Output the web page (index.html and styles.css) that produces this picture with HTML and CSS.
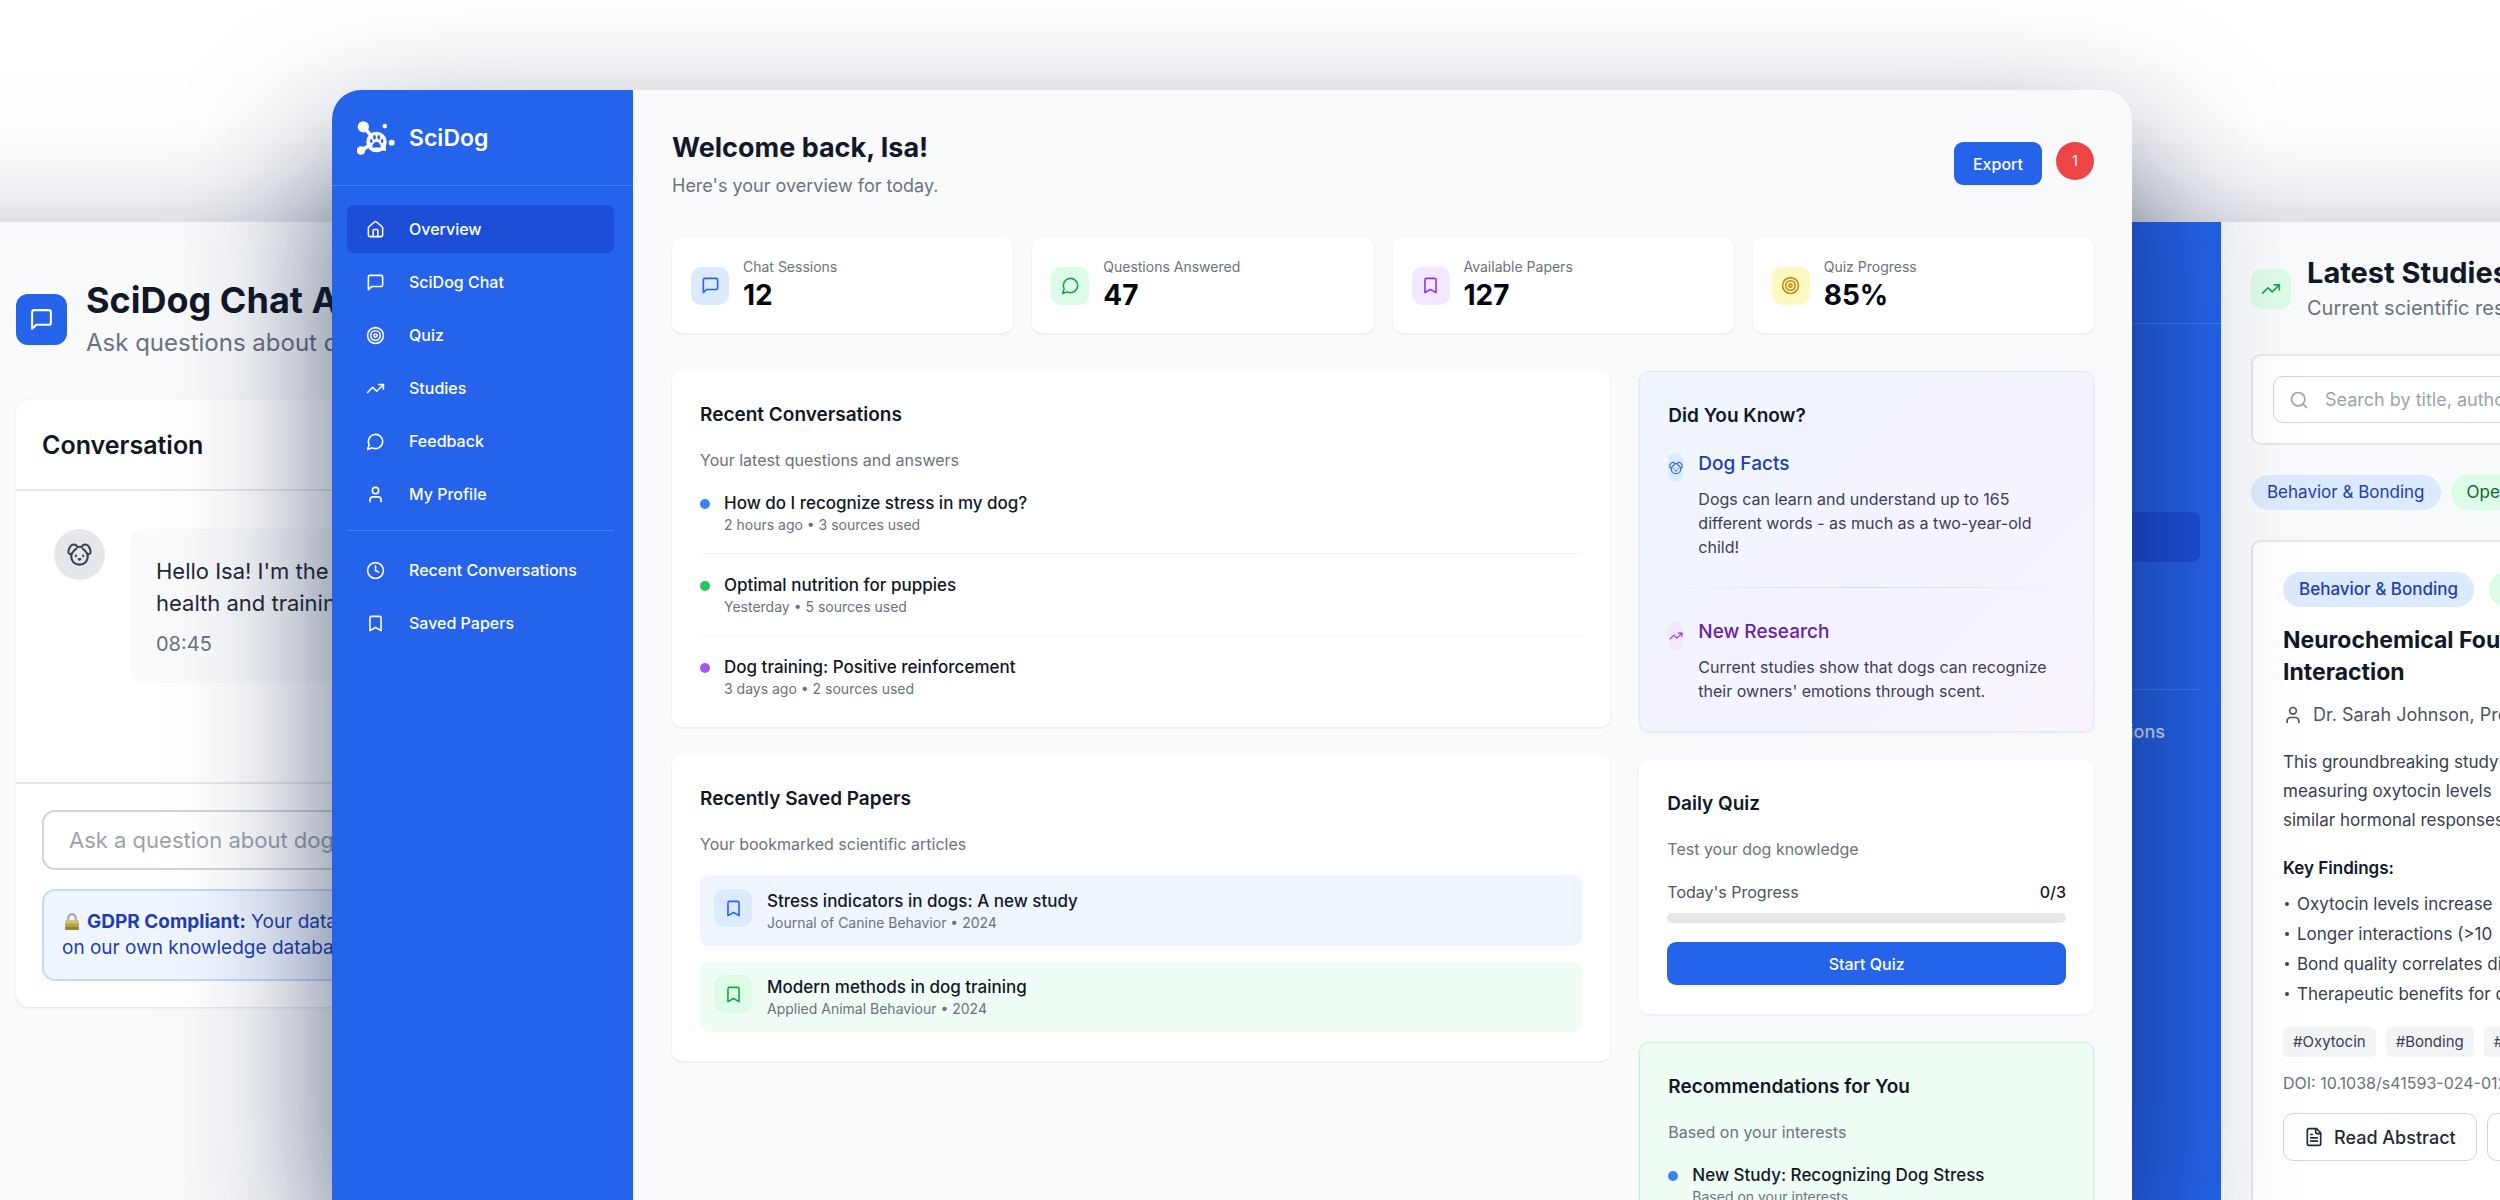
FILE: index.html
```
<!DOCTYPE html>
<html lang="en">
<head>
<meta charset="utf-8">
<title>SciDog</title>
<link rel="stylesheet" href="styles.css">
</head>
<body>
<svg class="defs" aria-hidden="true">
  <symbol id="i-home" viewBox="0 0 24 24"><path d="M15 21v-8a1 1 0 0 0-1-1h-4a1 1 0 0 0-1 1v8"/><path d="M3 10a2 2 0 0 1 .7-1.5l7-6a2 2 0 0 1 2.6 0l7 6A2 2 0 0 1 21 10v9a2 2 0 0 1-2 2H5a2 2 0 0 1-2-2z"/></symbol>
  <symbol id="i-chat" viewBox="0 0 24 24"><path d="M21 15a2 2 0 0 1-2 2H7l-4 4V5a2 2 0 0 1 2-2h14a2 2 0 0 1 2 2z"/></symbol>
  <symbol id="i-target" viewBox="0 0 24 24"><circle cx="12" cy="12" r="10"/><circle cx="12" cy="12" r="6"/><circle cx="12" cy="12" r="2"/></symbol>
  <symbol id="i-trend" viewBox="0 0 24 24"><path d="M22 7l-8.5 8.5-5-5L2 17"/><path d="M16 7h6v6"/></symbol>
  <symbol id="i-bubble" viewBox="0 0 24 24"><path d="M7.9 20A9 9 0 1 0 4 16.1L2 22z"/></symbol>
  <symbol id="i-user" viewBox="0 0 24 24"><path d="M19 21v-2a4 4 0 0 0-4-4H9a4 4 0 0 0-4 4v2"/><circle cx="12" cy="7" r="4"/></symbol>
  <symbol id="i-clock" viewBox="0 0 24 24"><circle cx="12" cy="12" r="10"/><path d="M12 6v6l4 2"/></symbol>
  <symbol id="i-mark" viewBox="0 0 24 24"><path d="M19 21l-7-4-7 4V5a2 2 0 0 1 2-2h10a2 2 0 0 1 2 2z"/></symbol>
  <symbol id="i-search" viewBox="0 0 24 24"><circle cx="11" cy="11" r="8"/><path d="M21 21l-4.3-4.3"/></symbol>
  <symbol id="i-file" viewBox="0 0 24 24"><path d="M15 2H6a2 2 0 0 0-2 2v16a2 2 0 0 0 2 2h12a2 2 0 0 0 2-2V7z"/><path d="M14 2v4a2 2 0 0 0 2 2h4"/><path d="M10 9H8"/><path d="M16 13H8"/><path d="M16 17H8"/></symbol>
  <symbol id="i-dog" viewBox="0 0 24 24"><path d="M10 5C9.200 3 7.200 2 5.200 2.600 3 3.300 1 7.600 1.400 10.200c.3 1.700 2.300 1.800 3.400.6C6.200 9.200 6.800 7.400 8.800 6.800"/><path d="M14 5c.8-2 2.800-3 4.800-2.400 2.200.7 4.200 5 3.800 7.600-.3 1.700-2.300 1.800-3.400.6-1.400-1.600-2-3.400-4-4"/><path d="M10 4.800c1.300-.4 2.700-.4 4 0"/><path d="M4.600 11.500c-.4 1-.5 2-.5 3 0 4 3.400 7.200 7.900 7.200s7.900-3.200 7.900-7.200c0-1-.1-2-.5-3"/><path d="M8.500 13v.6"/><path d="M15.500 13v.6"/><path d="M11.200 16.400h1.600l-.8.700z"/></symbol>
</svg>

<div class="stage">

  <section class="window chat">
    <header class="chat-head">
      <span class="tile"><svg class="icon"><use href="#i-chat"/></svg></span>
      <div>
        <h1>SciDog Chat AI</h1>
        <p>Ask questions about dogs</p>
      </div>
    </header>
    <div class="chat-card">
      <h2>Conversation</h2>
      <div class="thread">
        <span class="avatar"><svg class="icon"><use href="#i-dog"/></svg></span>
        <div class="bubble">
          <p>Hello Isa! I'm the<br>health and training</p>
          <time>08:45</time>
        </div>
      </div>
      <div class="composer">
        <input type="text" aria-label="Question" placeholder="Ask a question about dogs">
        <p class="gdpr"><svg class="lock" viewBox="0 0 15 18"><path d="M4 9V5.500a3.500 3.500 0 0 1 7 0V9" fill="none" stroke="#a3a9ab" stroke-width="2"/><rect x="1" y="8" width="13" height="9" rx="1" fill="#b5a642"/><rect x="1" y="8" width="13" height="3" rx="1" fill="#d0c56d"/><rect x="1" y="14" width="13" height="3" rx="1" fill="#93852f"/></svg><strong>GDPR Compliant:</strong> Your data<br>on our own knowledge database</p>
      </div>
    </div>
  </section>

  <section class="window studies">
    <aside class="s-side">
      <div class="s-logo"></div>
      <div class="s-active"></div>
      <hr>
      <a href="#">Recent Conversations</a>
    </aside>
    <div class="s-main">
      <header class="s-head">
        <span class="tile"><svg class="icon"><use href="#i-trend"/></svg></span>
        <div>
          <h1>Latest Studies</h1>
          <p>Current scientific research</p>
        </div>
      </header>
      <div class="s-search">
        <label><svg class="icon"><use href="#i-search"/></svg><input type="search" aria-label="Search studies" placeholder="Search by title, author"></label>
      </div>
      <div class="chips"><span class="chip blue">Behavior &amp; Bonding</span><span class="chip green">Open Access</span></div>
      <article class="study">
        <div class="chips wide"><span class="chip blue">Behavior &amp; Bonding</span><span class="chip green"></span></div>
        <h2>Neurochemical Foundations<br>Interaction</h2>
        <p class="author"><svg class="icon"><use href="#i-user"/></svg>Dr. Sarah Johnson, Prof.</p>
        <p class="abstract">This groundbreaking study<br>measuring oxytocin levels<br>similar hormonal responses</p>
        <h3>Key Findings:</h3>
        <ul>
          <li>Oxytocin levels increase</li>
          <li>Longer interactions (&gt;10</li>
          <li>Bond quality correlates directly</li>
          <li>Therapeutic benefits for dogs</li>
        </ul>
        <div class="tags"><span>#Oxytocin</span><span>#Bonding</span><span>#Dogs</span></div>
        <p class="doi">DOI: 10.1038/s41593-024-012</p>
        <div class="actions">
          <button type="button"><svg class="icon"><use href="#i-file"/></svg>Read Abstract</button>
          <button type="button" aria-label="More"></button>
        </div>
      </article>
    </div>
  </section>

  <section class="window app">
    <aside class="side">
      <div class="brand">
        <svg class="logo" viewBox="0 0 115 102"><g stroke="#fff" stroke-width="11"><path d="M19 17L50 52"/><path d="M11 89L44 70"/></g><g fill="#fff"><circle cx="19" cy="17" r="17"/><circle cx="84" cy="15" r="7"/><circle cx="105" cy="65" r="9"/><circle cx="12" cy="89" r="13"/><circle cx="59" cy="63" r="31"/><path d="M70 88l18 2-2-22z"/></g><g fill="#2563eb"><path d="M59 63c7 0 13 8 13 13 0 6-7 4-13 4s-13 2-13-4c0-5 6-13 13-13z"/><ellipse cx="43" cy="60" rx="4" ry="6"/><ellipse cx="53" cy="49" rx="4" ry="7"/><ellipse cx="66" cy="49" rx="4" ry="7"/><ellipse cx="76" cy="60" rx="4" ry="6"/></g></svg>
        <span>SciDog</span>
      </div>
      <nav>
        <a href="#" class="on"><svg class="icon"><use href="#i-home"/></svg>Overview</a>
        <a href="#"><svg class="icon"><use href="#i-chat"/></svg>SciDog Chat</a>
        <a href="#"><svg class="icon"><use href="#i-target"/></svg>Quiz</a>
        <a href="#"><svg class="icon"><use href="#i-trend"/></svg>Studies</a>
        <a href="#"><svg class="icon"><use href="#i-bubble"/></svg>Feedback</a>
        <a href="#"><svg class="icon"><use href="#i-user"/></svg>My Profile</a>
      </nav>
      <nav class="second">
        <a href="#"><svg class="icon"><use href="#i-clock"/></svg>Recent Conversations</a>
        <a href="#"><svg class="icon"><use href="#i-mark"/></svg>Saved Papers</a>
      </nav>
    </aside>
    <main>
      <header class="top">
        <div>
          <h1>Welcome back, Isa!</h1>
          <p>Here's your overview for today.</p>
        </div>
        <div class="top-actions">
          <button type="button" class="primary">Export</button>
          <span class="count">1</span>
        </div>
      </header>
      <div class="stats">
        <div class="card stat"><span class="tile blue"><svg class="icon"><use href="#i-chat"/></svg></span><div><p>Chat Sessions</p><strong>12</strong></div></div>
        <div class="card stat"><span class="tile green"><svg class="icon"><use href="#i-bubble"/></svg></span><div><p>Questions Answered</p><strong>47</strong></div></div>
        <div class="card stat"><span class="tile purple"><svg class="icon"><use href="#i-mark"/></svg></span><div><p>Available Papers</p><strong>127</strong></div></div>
        <div class="card stat"><span class="tile yellow"><svg class="icon"><use href="#i-target"/></svg></span><div><p>Quiz Progress</p><strong>85%</strong></div></div>
      </div>
      <div class="columns">
        <div class="col left">
          <section class="card">
            <h2>Recent Conversations</h2>
            <p class="sub">Your latest questions and answers</p>
            <ul class="convos">
              <li class="entry c-blue"><h3>How do I recognize stress in my dog?</h3><p>2 hours ago • 3 sources used</p></li>
              <li class="entry c-green"><h3>Optimal nutrition for puppies</h3><p>Yesterday • 5 sources used</p></li>
              <li class="entry c-purple"><h3>Dog training: Positive reinforcement</h3><p>3 days ago • 2 sources used</p></li>
            </ul>
          </section>
          <section class="card">
            <h2>Recently Saved Papers</h2>
            <p class="sub">Your bookmarked scientific articles</p>
            <ul class="papers">
              <li class="paper p-blue"><span class="tile blue"><svg class="icon"><use href="#i-mark"/></svg></span><div class="entry-text"><h3>Stress indicators in dogs: A new study</h3><p>Journal of Canine Behavior • 2024</p></div></li>
              <li class="paper p-green"><span class="tile green"><svg class="icon"><use href="#i-mark"/></svg></span><div class="entry-text"><h3>Modern methods in dog training</h3><p>Applied Animal Behaviour • 2024</p></div></li>
            </ul>
          </section>
        </div>
        <div class="col">
          <section class="card know">
            <h2>Did You Know?</h2>
            <div class="fact f-blue"><span class="pill"><svg class="icon"><use href="#i-dog"/></svg></span><div><h3>Dog Facts</h3><p>Dogs can learn and understand up to 165 different words - as much as a two-year-old child!</p></div></div>
            <hr>
            <div class="fact f-purple"><span class="pill"><svg class="icon"><use href="#i-trend"/></svg></span><div><h3>New Research</h3><p>Current studies show that dogs can recognize their owners' emotions through scent.</p></div></div>
          </section>
          <section class="card">
            <h2>Daily Quiz</h2>
            <p class="sub">Test your dog knowledge</p>
            <div class="progress-row"><label for="quiz">Today's Progress</label><span>0/3</span></div>
            <progress id="quiz" value="0" max="3"></progress>
            <button type="button" class="primary full">Start Quiz</button>
          </section>
          <section class="card reco">
            <h2>Recommendations for You</h2>
            <p class="sub">Based on your interests</p>
            <ul class="convos">
              <li class="entry c-blue"><h3>New Study: Recognizing Dog Stress</h3><p>Based on your interests</p></li>
            </ul>
          </section>
        </div>
      </div>
    </main>
  </section>

</div>
</body>
</html>
```

FILE: styles.css
```
* { box-sizing: border-box; margin: 0; padding: 0; }

body {
  font-family: Inter, "Liberation Sans", sans-serif;
  color: #111827;
  background: #fff;
}

ul { list-style: none; }
a { text-decoration: none; color: inherit; }
button, input { font: inherit; }
hr { border: 0; }

.defs { position: absolute; width: 0; height: 0; }

.icon {
  flex: none;
  width: 19px;
  height: 19px;
  fill: none;
  stroke: currentColor;
  stroke-width: 2;
  stroke-linecap: round;
  stroke-linejoin: round;
}

/* Three overlapping windows */
.stage {
  position: relative;
  height: 100vh;
  min-height: 900px;
  overflow: hidden;
}

.window {
  position: absolute;
  background: #f9fafb;
  box-shadow: 0 64px 145px rgba(10, 28, 70, .66);
}

.tile {
  display: flex;
  align-items: center;
  justify-content: center;
  flex: none;
  width: 38px;
  height: 38px;
  border-radius: 10px;
}

.tile.blue { background: #dbeafe; color: #2563eb; }
.tile.green { background: #dcfce7; color: #16a34a; }
.tile.purple { background: #f3e8ff; color: #9333ea; }
.tile.yellow { background: #fef9c3; color: #ca8a04; }

/* Chat window, left */
.chat {
  top: 222px;
  left: -200px;
  right: 79%;
  bottom: -100px;
  padding: 54px 0 0 216px;
  overflow: hidden;
  white-space: nowrap;
}

.chat-head { display: flex; align-items: center; gap: 19px; margin-bottom: 38px; }
.chat-head .tile { width: 51px; height: 51px; border-radius: 12px; background: #2563eb; color: #fff; }
.chat-head .icon { width: 25px; height: 25px; }
.chat-head h1 { font-size: 36px; line-height: 48px; font-weight: 700; }
.chat-head p { font-size: 24px; line-height: 38px; color: #6b7280; }

.chat-card { background: #fff; border-radius: 13px; box-shadow: 0 1px 3px rgba(0, 0, 0, .1); }
.chat-card h2 {
  padding: 27px 26px 26px;
  font-size: 25px;
  line-height: 36px;
  font-weight: 600;
  border-bottom: 2px solid #e5e7eb;
}

.thread { display: flex; align-items: flex-start; gap: 25px; height: 291px; padding: 38px; }
.avatar {
  display: flex;
  align-items: center;
  justify-content: center;
  width: 51px;
  height: 51px;
  border-radius: 50%;
  background: #e5e7eb;
  color: #374151;
}
.avatar .icon { width: 25px; height: 25px; }
.bubble { flex: 1; padding: 26px; border-radius: 13px; background: #f9fafb; color: #1f2937; }
.bubble p { font-size: 22px; line-height: 32px; }
.bubble time { display: block; margin-top: 12px; font-size: 20px; line-height: 26px; color: #6b7280; }

.composer { padding: 26px; border-top: 2px solid #e5e7eb; }
.composer input {
  display: block;
  width: 100%;
  height: 60px;
  padding: 0 25px;
  font-size: 22px;
  border: 2px solid #d1d5db;
  border-radius: 13px;
  background: #fff;
}
.composer input::placeholder, .s-search input::placeholder { color: #9ca3af; }
.gdpr {
  margin-top: 19px;
  padding: 18px;
  font-size: 19px;
  line-height: 26px;
  color: #1e40af;
  background: #eff6ff;
  border: 2px solid #bfdbfe;
  border-radius: 13px;
}
.gdpr strong { font-weight: 700; }
.lock { width: 16px; height: 19px; margin: 0 7px 0 2px; vertical-align: -3px; }

/* Studies window, right */
.studies {
  display: flex;
  top: 222px;
  left: calc(100% - 604px);
  right: -200px;
  bottom: -100px;
  overflow: hidden;
  white-space: nowrap;
}

.s-side { flex: none; width: 325px; padding: 0 21px 0 12px; background: #2563eb; color: #dbeafe; }
.s-logo { height: 102px; margin: 0 -21px 0 -12px; border-bottom: 1px solid #3b82f6; }
.s-active { height: 50px; margin-top: 188px; border-radius: 8px; background: #1d4ed8; }
.s-side hr { margin-top: 127px; border-top: 1px solid #3b82f6; }
.s-side a { display: block; padding: 29px 35px 0 0; font-size: 18px; line-height: 26px; font-weight: 500; text-align: right; }

.s-main { flex: 1; padding: 32px 30px 0; }
.s-head { display: flex; align-items: center; gap: 16px; margin-bottom: 30px; }
.s-head .tile { width: 40px; height: 40px; background: #dcfce7; color: #16a34a; }
.s-head .icon { width: 20px; height: 20px; }
.s-head h1 { font-size: 29px; line-height: 38px; font-weight: 700; }
.s-head p { font-size: 20px; line-height: 32px; color: #6b7280; }

.s-search { padding: 20px; background: #fff; border: 2px solid #e5e7eb; border-radius: 10px; }
.s-search label {
  display: flex;
  align-items: center;
  gap: 16px;
  height: 47px;
  padding: 0 15px;
  color: #9ca3af;
  border: 1px solid #d1d5db;
  border-radius: 10px;
}
.s-search .icon { width: 20px; height: 20px; }
.s-search input { flex: 1; border: 0; outline: 0; background: none; font-size: 18px; }

.chips { display: flex; gap: 10px; margin: 30px 0; }
.chips.wide { gap: 15px; margin: 0 0 17px; }
.chip { min-width: 120px; padding: 5px 16px; font-size: 17px; line-height: 25px; border-radius: 18px; }
.chip.blue { background: #dbeafe; color: #1e40af; }
.chip.green { background: #dcfce7; color: #166534; }
.wide .chip { font-weight: 500; }

.study {
  padding: 30px 30px 60px;
  background: #fff;
  border: 2px solid #e5e7eb;
  border-radius: 10px;
  color: #374151;
}
.study h2 { font-size: 23px; line-height: 32px; font-weight: 700; color: #111827; }
.author { display: flex; align-items: center; gap: 10px; margin-top: 14px; font-size: 18px; line-height: 26px; color: #4b5563; }
.author .icon { width: 20px; height: 20px; }
.abstract { margin-top: 20px; font-size: 17px; line-height: 29px; }
.study h3 { margin-top: 20px; font-size: 17px; line-height: 26px; font-weight: 600; color: #111827; }
.study ul { margin-top: 8px; font-size: 17px; line-height: 30px; }
.study li { display: flex; align-items: center; gap: 8px; }
.study li::before { content: ""; width: 4px; height: 4px; margin-left: 2px; border-radius: 50%; background: #374151; }
.tags { display: flex; gap: 10px; margin-top: 18px; }
.tags span { padding: 0 10px; font-size: 15px; line-height: 30px; background: #f3f4f6; border-radius: 5px; }
.doi { margin-top: 14px; font-size: 16px; line-height: 24px; color: #6b7280; }
.actions { display: flex; gap: 10px; margin-top: 18px; }
.actions button {
  display: flex;
  align-items: center;
  gap: 10px;
  min-width: 120px;
  height: 48px;
  padding: 0 20px;
  font-size: 18px;
  font-weight: 500;
  color: #1f2937;
  background: #fff;
  border: 1px solid #d1d5db;
  border-radius: 10px;
}
.actions .icon { width: 20px; height: 20px; }

/* Dashboard window, centre */
.app {
  display: flex;
  top: 90px;
  left: 332px;
  right: 368px;
  bottom: 0;
  overflow: hidden;
  border-radius: 29px 29px 0 0;
}

.side { flex: none; width: 301px; background: #2563eb; color: #fff; }
.brand {
  display: flex;
  align-items: center;
  gap: 14px;
  height: 96px;
  padding: 0 25px;
  font-size: 23px;
  font-weight: 600;
  border-bottom: 1px solid #3b82f6;
}
.logo { width: 38px; height: 34px; }
.side nav { display: flex; flex-direction: column; gap: 5px; padding: 19px 19px 12px 15px; }
.side nav a {
  display: flex;
  align-items: center;
  gap: 24px;
  height: 48px;
  padding: 0 19px;
  font-size: 16px;
  font-weight: 500;
  border-radius: 7px;
}
.side nav a.on { background: #1d4ed8; }
.side nav.second { margin: 0 19px 0 15px; padding: 15px 0; border-top: 1px solid #3b82f6; }

main { flex: 1; min-width: 0; padding: 40px 38px 0 39px; }

.top { display: flex; justify-content: space-between; margin-bottom: 38px; }
.top h1 { font-size: 27px; line-height: 36px; font-weight: 700; }
.top p { margin-top: 6px; font-size: 18px; line-height: 28px; color: #6b7280; }
.top-actions { display: flex; align-items: flex-start; gap: 14px; padding-top: 12px; }
.primary {
  height: 43px;
  padding: 0 19px;
  font-size: 16px;
  font-weight: 500;
  color: #fff;
  background: #2563eb;
  border: 0;
  border-radius: 9px;
}
.count {
  width: 38px;
  height: 38px;
  font-size: 14px;
  line-height: 38px;
  text-align: center;
  color: #fff;
  background: #ef4444;
  border-radius: 50%;
}

.card { padding: 30px 28px 29px; background: #fff; border-radius: 10px; box-shadow: 0 1px 3px rgba(0, 0, 0, .08); }
.card h2 { font-size: 19px; line-height: 28px; font-weight: 600; }
.sub { margin-top: 19px; font-size: 16px; line-height: 24px; color: #6b7280; }

.stats { display: grid; grid-template-columns: repeat(4, 1fr); gap: 19px; margin-bottom: 38px; }
.stat { display: flex; align-items: center; gap: 14px; padding: 19px; }
.stat p { font-size: 14px; line-height: 19px; color: #6b7280; }
.stat strong { display: block; font-size: 28px; line-height: 38px; font-weight: 700; color: #030712; }

.columns { display: grid; grid-template-columns: repeat(3, 1fr); gap: 29px; align-items: start; }
.col { display: grid; gap: 28px; }
.col.left { grid-column: span 2; }

.entry { position: relative; padding: 19px 0 19px 24px; border-bottom: 1px solid #f3f4f6; }
.entry:last-child { padding-bottom: 0; border-bottom: 0; }
.entry h3, .entry-text h3 { font-size: 17px; line-height: 24px; font-weight: 500; }
.entry p, .entry-text p { font-size: 14px; line-height: 19px; color: #6b7280; }
.entry::before { content: ""; position: absolute; left: 0; top: 27px; width: 10px; height: 10px; border-radius: 50%; }
.c-blue::before { background: #3b82f6; }
.c-green::before { background: #22c55e; }
.c-purple::before { background: #a855f7; }

.papers { display: grid; gap: 15px; margin-top: 19px; }
.paper { display: flex; align-items: flex-start; gap: 15px; padding: 14px; border-radius: 9px; }
.p-blue { background: #eff6ff; }
.p-green { background: #f0fdf4; }

.know { padding: 30px 28px 28px; border: 1px solid #dbeafe; background: linear-gradient(135deg, #eff6ff, #f5f3ff 60%, #faf5ff 95%, #fdf2ff); }
.fact { display: flex; align-items: flex-start; gap: 15px; margin-top: 20px; }
.fact h3 { font-size: 19px; line-height: 28px; font-weight: 500; }
.fact p { margin-top: 9px; font-size: 16px; line-height: 24px; color: #374151; }
.pill { display: flex; align-items: center; justify-content: center; flex: none; width: 15px; height: 29px; margin-top: 3px; border-radius: 8px; }
.pill .icon { width: 14px; height: 14px; }
.f-blue h3 { color: #1e40af; }
.f-blue .pill { background: #dbeafe; color: #2563eb; }
.f-purple h3 { color: #6b21a8; }
.f-purple .pill { background: #f3e8ff; color: #9333ea; }
.know hr { height: 1px; margin: 28px 0 30px; background: linear-gradient(90deg, transparent, #bfdbfe, transparent); }

.progress-row { display: flex; justify-content: space-between; margin: 19px 0 9px; font-size: 16px; line-height: 24px; font-weight: 500; }
.progress-row label { font-weight: 400; color: #4b5563; }
progress { display: block; width: 100%; height: 10px; appearance: none; border: 0; border-radius: 5px; background: #e5e7eb; overflow: hidden; }
progress::-webkit-progress-bar { background: #e5e7eb; }
progress::-webkit-progress-value { background: #2563eb; }
.full { width: 100%; margin-top: 19px; }

.reco { border: 1px solid #bbf7d0; background: #f0fdf4; }
```
